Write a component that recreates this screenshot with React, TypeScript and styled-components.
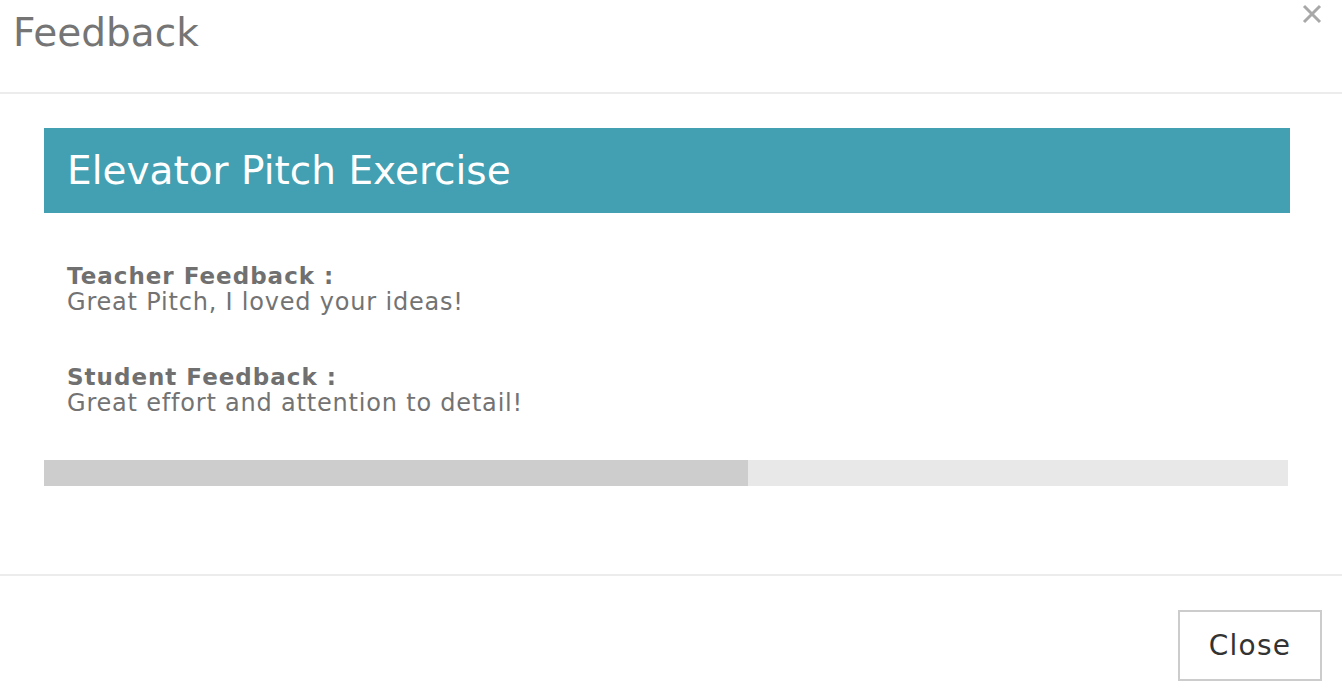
import React from "react";
import styled, { createGlobalStyle } from "styled-components";

const Global = createGlobalStyle`
  html, body { margin: 0; padding: 0; background: #fff; }
  body { font-family: "DejaVu Sans", "Open Sans", sans-serif; color: #777; }
  * { box-sizing: border-box; }
`;

const Modal = styled.div`
  width: 1342px;
  height: 696px;
  display: flex;
  flex-direction: column;
  background: #fff;
`;

const Header = styled.header`
  height: 94px;
  border-bottom: 2px solid #ececec;
  display: flex;
  justify-content: space-between;
  align-items: flex-start;
  padding: 0 18px 0 13px;
`;

const HeaderTitle = styled.h1`
  margin: 0;
  margin-top: 10px;
  font-size: 39px;
  font-weight: 400;
  color: #757575;
  line-height: 46px;
`;

const CloseX = styled.button`
  border: none;
  background: none;
  padding: 0;
  margin-top: 4px;
  width: 24px;
  height: 20px;
  cursor: pointer;
  display: flex;
  align-items: center;
  justify-content: center;
`;

const Body = styled.main`
  flex: 1;
  padding: 34px 52px 0 44px;
  display: flex;
  flex-direction: column;
  border-bottom: 2px solid #ececec;
`;

const Banner = styled.div`
  height: 85px;
  background: #439fb2;
  display: flex;
  align-items: center;
  padding-left: 23px;
`;

const BannerTitle = styled.h2`
  margin: 0;
  font-size: 39px;
  font-weight: 400;
  color: #fff;
`;

const Entries = styled.div`
  padding: 50px 23px 0;
  display: flex;
  flex-direction: column;
  gap: 49px;
`;

const Entry = styled.div`
  display: flex;
  flex-direction: column;
`;

const Label = styled.div`
  font-size: 23px;
  font-weight: 700;
  line-height: 26px;
  letter-spacing: 1px;
  color: #707070;
`;

const Text = styled.div`
  font-size: 24px;
  font-weight: 400;
  line-height: 26px;
  letter-spacing: 0.8px;
  color: #737373;
`;

const Track = styled.div`
  margin-top: 44px;
  margin-right: 2px;
  height: 26px;
  background: #e8e8e8;
  display: flex;
`;

const Fill = styled.div`
  height: 100%;
  background: #cdcdcd;
`;

const Footer = styled.footer`
  height: 120px;
  display: flex;
  justify-content: flex-end;
  align-items: flex-start;
  padding: 34px 20px 0 0;
`;

const Button = styled.button`
  width: 144px;
  height: 71px;
  border: 2px solid #cccccc;
  background: #fff;
  font-family: "DejaVu Sans", "Open Sans", sans-serif;
  font-size: 28px;
  font-weight: 400;
  letter-spacing: 1.2px;
  color: #333;
  cursor: pointer;
`;

export default function App() {
  const progress = 56.6;
  return (
    <>
      <Global />
      <Modal>
        <Header>
          <HeaderTitle>Feedback</HeaderTitle>
          <CloseX aria-label="close">
            <svg width="20" height="20" viewBox="0 0 20 20">
              <path d="M2 2 L18 18 M18 2 L2 18" stroke="#a8a8a8" strokeWidth="3" />
            </svg>
          </CloseX>
        </Header>
        <Body>
          <Banner>
            <BannerTitle>Elevator Pitch Exercise</BannerTitle>
          </Banner>
          <Entries>
            <Entry>
              <Label>Teacher Feedback :</Label>
              <Text>Great Pitch, I loved your ideas!</Text>
            </Entry>
            <Entry>
              <Label>Student Feedback :</Label>
              <Text>Great effort and attention to detail!</Text>
            </Entry>
          </Entries>
          <Track>
            <Fill style={{ width: `${progress}%` }} />
          </Track>
        </Body>
        <Footer>
          <Button>Close</Button>
        </Footer>
      </Modal>
    </>
  );
}
